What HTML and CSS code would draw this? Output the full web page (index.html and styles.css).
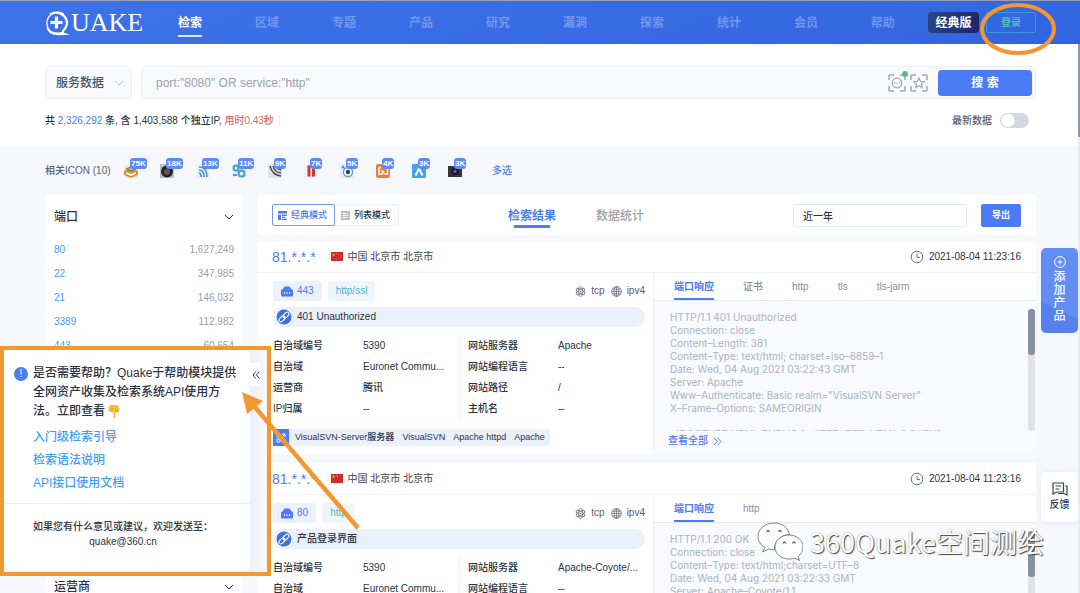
FILE: index.html
```html
<!DOCTYPE html>
<html lang="zh-CN">
<head>
<meta charset="utf-8">
<title>QUAKE</title>
<link rel="stylesheet" href="styles.css">
</head>
<body>
<svg class="sprite" aria-hidden="true">
  <symbol id="chev" viewBox="0 0 10 10"><path d="M1 3l4 4 4-4" fill="none" stroke="currentColor"/></symbol>
  <symbol id="clock" viewBox="0 0 14 14"><circle cx="7" cy="7" r="5.800" fill="none" stroke="currentColor"/><path d="M7 3.500V7.500H10" fill="none" stroke="currentColor"/></symbol>
  <symbol id="flag" viewBox="0 0 12 9"><path fill="#cf2f2c" d="M0 0h12v9H0z"/><path fill="#f5c842" d="M2.600 1l.4 1.200h1.200l-1 .7.4 1.200-1-.7-1 .7.4-1.200-1-.7h1.200zM5 .8h.8v.8H5zM6 2.200h.8V3H6z"/></symbol>
  <symbol id="dock" viewBox="0 0 12 11"><path fill="#4b7bf5" d="M3.500.5h5l2 3H11q1 0 1 1V9.500q0 1-1 1H1q-1 0-1-1V4.500q0-1 1-1h.5z"/><path stroke="#edf1fe" d="M3.500 6v2M6 6v2M8.500 6v2"/></symbol>
  <symbol id="link" viewBox="0 0 16 16"><circle cx="8" cy="8" r="7.500" fill="#3f72d9"/><g fill="none" stroke="#fff" stroke-width="1.100"><rect x="6.500" y="4.200" width="7" height="3.800" rx="1.900" transform="rotate(-42 10 6.100)"/><rect x="2.500" y="8" width="7" height="3.800" rx="1.900" transform="rotate(-42 6 9.900)"/></g></symbol>
  <symbol id="atom" viewBox="0 0 12 12"><g fill="none" stroke="#6e7480" stroke-width=".9"><ellipse cx="6" cy="6" rx="2.300" ry="5.400"/><ellipse cx="6" cy="6" rx="2.300" ry="5.400" transform="rotate(60 6 6)"/><ellipse cx="6" cy="6" rx="2.300" ry="5.400" transform="rotate(120 6 6)"/></g><circle cx="6" cy="6" r="1" fill="#6e7480"/></symbol>
  <symbol id="globe" viewBox="0 0 12 12"><g fill="none" stroke="#6e7480" stroke-width=".9"><circle cx="6" cy="6" r="5.300"/><ellipse cx="6" cy="6" rx="2.500" ry="5.300"/><path d="M6 .7v10.600M.7 6h10.600M1.400 3.500h9.200M1.400 8.500h9.200"/></g></symbol>
  <symbol id="more" viewBox="0 0 10 10"><path d="M1 1l4 4-4 4M5 1l4 4-4 4" fill="none" stroke="currentColor"/></symbol>
</svg>

<header class="topbar">
  <a class="logo" href="#" aria-label="QUAKE">
    <svg class="logo-mark" viewBox="0 0 27 26"><path fill="none" stroke="#fff" stroke-width="1.300" d="M20 4A11 11 0 1 0 12 24"/><path fill="none" stroke="#fff" stroke-width="2.200" d="M6 4.500A11 10.500 0 0 1 23 13Q22.500 18 18.500 21.500"/><path fill="#fff" d="M2 17q5 5.500 12 5.500 3 0 5-1.500l1.500 2 5.500 1.500q-7 1-13 .8Q4 24.500 2 17z"/><path stroke="#fff" stroke-width="3.200" d="M12.500 6.500v12M6.500 12.500h12"/></svg>
    <span class="logo-text">UAKE</span>
  </a>
  <nav class="nav">
    <a class="on" href="#">检索</a><a href="#">区域</a><a href="#">专题</a><a href="#">产品</a><a href="#">研究</a><a href="#">漏洞</a><a href="#">探索</a><a href="#">统计</a><a href="#">会员</a><a href="#">帮助</a>
  </nav>
  <div class="account">
    <button class="classic">经典版</button>
    <button class="login">登录</button>
  </div>
</header>

<section class="search">
  <form class="search-row">
    <div class="kind"><select aria-label="数据类型"><option>服务数据</option></select><svg><use href="#chev"/></svg></div>
    <div class="query">
      <input type="text" aria-label="检索语句" placeholder='port:"8080" OR service:"http"'>
      <button type="button" class="tool" aria-label="图标检索"><svg viewBox="0 0 18 18" fill="none" stroke="#a4a8b1" stroke-width="1.500"><path d="M1 6V1.800Q1 1 1.800 1H6M12 1h4.200q.8 0 .8.8V6M17 12v4.200q0 .8-.8.8H12M6 17H1.800Q1 17 1 16.200V12"/><circle cx="9" cy="9" r="4.800" stroke-width="1.200"/><path d="M6 9h1.400M8.300 9h1.400M10.600 9H12" stroke-width="1.200"/></svg><i class="dot"></i></button>
      <button type="button" class="tool" aria-label="收藏"><svg viewBox="0 0 18 18" fill="none" stroke="#a4a8b1" stroke-width="1.500"><path d="M1 6V1.800Q1 1 1.800 1H6M12 1h4.200q.8 0 .8.8V6M17 12v4.200q0 .8-.8.8H12M6 17H1.800Q1 17 1 16.200V12"/><path stroke-width="1.200" d="M9 4l1.500 3.300 3.600.4-2.700 2.400.8 3.500L9 11.800l-3.200 1.800.8-3.500-2.700-2.400 3.600-.4z"/></svg></button>
      <button type="button" class="go">搜 索</button>
    </div>
  </form>
  <div class="stats">
    <p>共 <b class="blue">2,326,292</b> 条, 含 1,403,588 个独立IP, <span class="red">用时0.43秒</span></p>
    <label class="latest">最新数据 <input type="checkbox"></label>
  </div>
</section>

<div class="icons">
  <span class="icons-label">相关ICON (10)</span>
  <ul class="icon-list">
    <li><svg viewBox="0 0 14 14"><rect width="14" height="14" fill="#f0eeea"/><path fill="#e58c35" d="M0 7l7-3 7 3v4l-7 3-7-3z"/><path fill="#fff" d="M2 8l5 2 5-2v2l-5 2-5-2z"/><path fill="#7c8a4b" d="M1 5l6-3 6 3-6 3z"/><path fill="#f0c56b" d="M4 5l3-1 3 1-3 1z"/></svg><span>75K</span></li>
    <li><svg viewBox="0 0 14 14"><rect width="14" height="14" fill="#bfc0c4"/><circle cx="7" cy="7.500" r="6" fill="#24242a"/><circle cx="7" cy="8" r="3" fill="#555a66"/><circle cx="5.500" cy="8.500" r="1.500" fill="#a04040"/></svg><span>18K</span></li>
    <li><svg viewBox="0 0 14 14"><rect width="14" height="14" fill="#eaf0f6"/><g fill="none" stroke="#4c95c9" stroke-width="1.700"><path d="M3 9q2 0 2 4M3 6q5 0 5 7M3 3q8 0 8 10"/></g></svg><span>13K</span></li>
    <li><svg viewBox="0 0 14 14"><rect width="14" height="14" fill="#e6f2f8"/><g fill="none" stroke="#3aa3cf" stroke-width="2"><circle cx="4" cy="4" r="2.500"/><circle cx="9.500" cy="9.500" r="3"/><path d="M1 11h4"/></g></svg><span>11K</span></li>
    <li><svg viewBox="0 0 14 14"><rect width="14" height="14" fill="#e1e2e5"/><g fill="none" stroke="#4b4d52" stroke-width="1.400"><path d="M2 2q2 9 11 10M5 2q1 6 8 7M8 2q1 3 5 4"/></g></svg><span>9K</span></li>
    <li><svg viewBox="0 0 14 14"><rect width="14" height="14" fill="#f3eff2"/><path fill="#d7352f" d="M3.500 1.500h3v11h-3zM8 1.500h3v11H8z"/></svg><span>7K</span></li>
    <li><svg viewBox="0 0 14 14"><rect width="14" height="14" fill="#e5edf6"/><circle cx="8" cy="8" r="4.500" fill="#fff" stroke="#5298d5" stroke-width="1.300"/><circle cx="8" cy="8" r="2.200" fill="#2b4467"/><circle cx="3" cy="3" r="1.500" fill="#5298d5"/></svg><span>5K</span></li>
    <li><svg viewBox="0 0 14 14"><rect width="14" height="14" rx="2" fill="#ee7f3b"/><path fill="none" stroke="#fff" stroke-width="1.500" d="M5 3.500H3v6.500h3L8 7M9 3.500h2.500V10H9L5.500 6.500"/></svg><span>4K</span></li>
    <li><svg viewBox="0 0 14 14"><rect width="14" height="14" rx="1" fill="#46a2ee"/><path fill="none" stroke="#fff" stroke-width="2" d="M3.500 11.500L7 4.500l3.500 7"/></svg><span>3K</span></li>
    <li><svg viewBox="0 0 14 14"><rect y="2" width="14" height="11" fill="#34343a"/><circle cx="7" cy="7.500" r="3.600" fill="#15151b"/><circle cx="7" cy="7.500" r="1.800" fill="#6854b0"/></svg><span>3K</span></li>
  </ul>
  <a class="multi" href="#">多选</a>
</div>

<main class="content">
  <aside class="facets">
    <section class="facet port">
      <h2>端口 <svg><use href="#chev"/></svg></h2>
      <ul>
        <li><a href="#">80</a><span>1,627,249</span></li>
        <li><a href="#">22</a><span>347,985</span></li>
        <li><a href="#">21</a><span>146,032</span></li>
        <li><a href="#">3389</a><span>112,982</span></li>
        <li><a href="#">443</a><span>60,654</span></li>
      </ul>
    </section>
    <section class="facet isp">
      <h2>运营商 <svg><use href="#chev"/></svg></h2>
    </section>
  </aside>

  <div class="results">
    <div class="toolbar">
      <div class="modes">
        <button class="on"><svg viewBox="0 0 9 9" fill="currentColor"><path d="M0 0h9v2.500H0zM0 3.500h3V9H0zM4 3.500h5V5H4zM4 5.700h3.500V7H4zM4 7.700h5V9H4z"/></svg>经典模式</button>
        <button><svg viewBox="0 0 9 9"><path fill="#bbbdc2" d="M0 0h9v9H0z"/><path stroke="#fff" stroke-width=".7" d="M1.500 2.500h6M1.500 4.500h6M1.500 6.500h6M3 1v7"/></svg>列表模式</button>
      </div>
      <div class="views"><button class="on">检索结果</button><button>数据统计</button></div>
      <input class="range" type="text" aria-label="时间范围" value="近一年">
      <button class="export">导出</button>
    </div>

    <article class="card">
      <header class="card-head">
        <a class="ip" href="#">81.*.*.*</a><svg class="flag"><use href="#flag"/></svg><span class="place">中国 北京市 北京市</span>
        <svg class="clock"><use href="#clock"/></svg><time>2021-08-04 11:23:16</time>
      </header>
      <div class="card-body">
        <div class="info">
          <div class="tags">
            <span class="tag"><svg><use href="#dock"/></svg>443</span><span class="tag teal">http/ssl</span>
            <span class="proto"><svg><use href="#atom"/></svg>tcp</span><span class="proto"><svg><use href="#globe"/></svg>ipv4</span>
          </div>
          <h3><svg><use href="#link"/></svg>401 Unauthorized</h3>
          <div class="facts">
            <dl><dt>自治域编号</dt><dd>5390</dd><dt>自治域</dt><dd>Euronet Commu...</dd><dt>运营商</dt><dd>腾讯</dd><dt>IP归属</dt><dd>--</dd></dl>
            <dl><dt>网站服务器</dt><dd>Apache</dd><dt>网站编程语言</dt><dd>--</dd><dt>网站路径</dt><dd>/</dd><dt>主机名</dt><dd>--</dd></dl>
          </div>
          <ul class="apps">
            <li class="apps-icon"><svg viewBox="0 0 10 10" fill="none" stroke="#fff"><path d="M1 1h3v3H1zM1 6h3v3H1zM6 6h3v3H6zM6 4l3-3M6 1h3v3"/></svg></li>
            <li>VisualSVN-Server服务器</li><li>VisualSVN</li><li>Apache httpd</li><li>Apache</li>
          </ul>
        </div>
        <div class="reply">
          <div class="tabs"><button class="on">端口响应</button><button>证书</button><button>http</button><button>tls</button><button>tls-jarm</button></div>
          <div class="pane"><pre>HTTP/1.1 401 Unauthorized
Connection: close
Content–Length: 381
Content–Type: text/html; charset=iso–8859–1
Date: Wed, 04 Aug 2021 03:22:43 GMT
Server: Apache
Www–Authenticate: Basic realm="VisualSVN Server"
X–Frame–Options: SAMEORIGIN

&lt;!DOCTYPE HTML PUBLIC "–//IETF//DTD HTML 2.0//EN"&gt;</pre><span class="bar"><i></i></span></div>
          <a class="all" href="#">查看全部 <svg><use href="#more"/></svg></a>
        </div>
      </div>
    </article>

    <article class="card">
      <header class="card-head">
        <a class="ip" href="#">81.*.*.*</a><svg class="flag"><use href="#flag"/></svg><span class="place">中国 北京市 北京市</span>
        <svg class="clock"><use href="#clock"/></svg><time>2021-08-04 11:23:16</time>
      </header>
      <div class="card-body">
        <div class="info">
          <div class="tags">
            <span class="tag"><svg><use href="#dock"/></svg>80</span><span class="tag teal">http</span>
            <span class="proto"><svg><use href="#atom"/></svg>tcp</span><span class="proto"><svg><use href="#globe"/></svg>ipv4</span>
          </div>
          <h3><svg><use href="#link"/></svg>产品登录界面</h3>
          <div class="facts">
            <dl><dt>自治域编号</dt><dd>5390</dd><dt>自治域</dt><dd>Euronet Commu...</dd></dl>
            <dl><dt>网站服务器</dt><dd>Apache-Coyote/...</dd><dt>网站编程语言</dt><dd>--</dd></dl>
          </div>
        </div>
        <div class="reply">
          <div class="tabs"><button class="on">端口响应</button><button>http</button></div>
          <div class="pane"><pre>HTTP/1.1 200 OK
Connection: close
Content–Type: text/html;charset=UTF–8
Date: Wed, 04 Aug 2021 03:22:33 GMT
Server: Apache–Coyote/1.1</pre><span class="bar"><i></i></span></div>
        </div>
      </div>
    </article>
  </div>
</main>

<button class="float add"><svg viewBox="0 0 12 12" fill="none" stroke="#fff"><circle cx="6" cy="6" r="5.400"/><path d="M6 3.500v5M3.500 6h5"/></svg><span>添加产品</span></button>
<button class="float feedback"><svg viewBox="0 0 16 14" fill="none" stroke="#3d4350" stroke-width="1.200"><path d="M1 1h10.500v9H4.500L1 12zM3.500 4h5.500M3.500 7h4M13 4h2v9l-3-1.500H6"/></svg><span>反馈</span></button>

<div class="help-zone">
  <section class="help">
    <div class="help-main">
      <span class="mark">!</span>
      <div>
        <p>是否需要帮助？Quake于帮助模块提供全网资产收集及检索系统API使用方法。立即查看<svg class="hand" viewBox="0 0 12 15"><path fill="#f6bd3f" d="M3 1h6q2.500 1 2.500 5 0 2.500-2 2.500L7.500 8v5.500q-1 1.500-2 0V8.500L2 8Q0 7.500.5 4.500 1 1.500 3 1z"/><path fill="none" stroke="#d99423" stroke-width=".6" d="M7.500 8V5M9.500 8V5M2 5h3"/></svg></p>
        <a href="#">入门级检索引导</a><a href="#">检索语法说明</a><a href="#">API接口使用文档</a>
      </div>
    </div>
    <p class="mail">如果您有什么意见或建议，欢迎发送至：<br>quake@360.cn</p>
  </section>
  <button class="fold" aria-label="收起"><svg viewBox="0 0 8 8" fill="none" stroke="#3a3f4b"><path d="M3.800.5L1 4l2.800 3.500M7.300.5L4.500 4l2.800 3.500"/></svg></button>
</div>

<div class="watermark">
  <svg viewBox="0 0 46 40" fill="#fff" stroke="#666" stroke-width=".8"><path d="M17 1C8 1 1 7 1 14.500c0 4.500 2.500 8.500 7 11L5.500 30l6-3c2 .6 4 .8 6 .7C17 20 23 13 32.500 12.500 31 5.500 25 1 17 1z"/><path d="M32 13c-8 0-14 5.500-14 12s6 12 14 12c2 0 4-.3 5.500-1l5 2.500-1.500-4c3-2.200 5-5.500 5-9.500 0-6.500-6-12-14-12z"/><g fill="none" stroke-width="1.300"><path d="M9.500 10q1.500-3 3 0M21.500 10q1.500-3 3 0M26 21.500q1.500-3 3 0M35.500 21.500q1.500-3 3 0"/></g></svg>
  <span>360Quake空间测绘</span>
</div>

<svg class="notes" viewBox="0 0 1080 593" preserveAspectRatio="xMinYMin" aria-hidden="true">
  <g fill="none" stroke="#f29833" stroke-width="4"><ellipse cx="1018" cy="29" rx="36" ry="24"/><path d="M2 348h267v226H2z"/><path d="M254 406l104 122" stroke-width="4.500"/></g>
  <path fill="#f29833" d="M242 392l21 9-16 13z"/>
</svg>
<span class="page-bar"><i></i></span>
</body>
</html>
```

FILE: styles.css
```css
* { box-sizing: border-box; }
body {
  margin: 0;
  height: 100vh;
  overflow: hidden;
  display: flex;
  flex-direction: column;
  position: relative;
  background: #f7f8fd;
  color: #2c3343;
  font: 500 10px/14px "Liberation Sans", "Noto Sans CJK SC", sans-serif;
}
button, input, select { font: inherit; color: inherit; margin: 0; padding: 0; border: 0; background: none; }
a { color: #409eff; text-decoration: none; }
ul, dl, dd, p, h2, h3, pre { margin: 0; padding: 0; list-style: none; }
svg { display: block; flex: none; }
.sprite { position: absolute; width: 0; height: 0; }

/* Header */
.topbar {
  flex: none;
  height: 44px;
  padding: 0 44px;
  display: flex;
  align-items: center;
  border-top: 1px solid #94a0bd;
  background: linear-gradient(160deg, #3d73e9, #3364df);
}
.logo { display: flex; align-items: center; width: 134px; color: #fff; }
.logo-mark { width: 27px; height: 26px; }
.logo-text { font: 26px/26px "Liberation Serif", serif; }
.nav { flex: 1; display: flex; justify-content: space-between; font-size: 12px; font-weight: 700; }
.nav a { line-height: 24px; padding-top: 3px; color: #7397ee; border-bottom: 2px solid transparent; }
.nav .on { color: #fff; border-color: #dfe8ff; }
.account { display: flex; gap: 7px; margin-left: 33px; }
.classic, .login { height: 21px; border-radius: 4px; }
.classic { width: 51px; font-size: 12px; font-weight: 700; color: #fff; background: linear-gradient(110deg, #27478a, #1b2669); }
.login { width: 50px; border: 1px solid #4295d8; border-radius: 2px; color: #50bcc0; font-weight: 700; }

/* Search */
.search { flex: none; background: #fff; padding: 22px 44px 18px 45px; }
.search-row { display: flex; gap: 9px; height: 33px; }
.kind, .query { display: flex; align-items: center; border: 1px solid #eff0f4; border-radius: 5px; background: #f9fafe; font-size: 12px; }
.kind { position: relative; width: 87px; }
.kind select { appearance: none; width: 100%; height: 100%; padding-left: 10px; color: #4d5360; }
.kind svg { position: absolute; right: 7px; width: 10px; height: 10px; color: #bfc2c9; pointer-events: none; }
.query { flex: 1; gap: 4px; padding: 0 3px 0 14px; }
.query input { flex: 1; height: 100%; outline: 0; }
.query input::placeholder { color: #9b9fa9; opacity: 1; }
.tool { position: relative; width: 18px; height: 18px; }
.dot { position: absolute; right: -2px; top: -3px; width: 6px; height: 6px; border-radius: 50%; background: #55bd8d; }
.go { width: 94px; height: 26px; margin-left: 6px; border-radius: 4px; background: #4b7bf5; color: #fff; font-weight: 700; }
.stats { display: flex; justify-content: space-between; align-items: center; padding: 14px 7px 0 0; }
.stats p { padding-right: 5px; border-right: 1px solid #eceef3; }
.blue { color: #4b7bf5; font-weight: 400; }
.red { color: #e06a66; }
.latest { display: flex; align-items: center; gap: 8px; color: #5b606c; }
.latest input { appearance: none; width: 29px; height: 15px; border-radius: 8px; background: radial-gradient(circle at 8px 50%, #fff 6px, #d5d8e1 7px); }

/* Site icons */
.icons { flex: none; height: 49px; padding: 0 45px; display: flex; align-items: center; color: #5b606c; }
.icons-label { width: 79px; }
.icon-list { display: flex; gap: 22px; }
.icon-list li { position: relative; }
.icon-list svg { width: 14px; height: 14px; }
.icon-list span { position: absolute; left: 6px; top: -6px; padding: 0 1px; border-radius: 3px; background: #5f8af7; color: #fff; font-size: 8px; font-weight: 700; line-height: 11px; }
.multi { margin-left: 30px; color: #4b7bf5; }

/* Columns */
.content { flex: 1; min-height: 0; padding: 0 44px 0 45px; display: flex; gap: 14px; align-items: flex-start; }
.facets { width: 198px; flex: none; }
.facet { padding: 0 9px; background: #fff; border-radius: 5px; }
.port { min-height: 376px; }
.facet h2 { display: flex; justify-content: space-between; align-items: center; height: 43px; font-size: 12px; font-weight: 500; }
.facet h2 svg { width: 10px; height: 10px; }
.isp h2 { height: 32px; }
.facet li { display: flex; justify-content: space-between; line-height: 24px; color: #9a9ea8; }
.results { flex: 1; min-width: 0; }

/* Toolbar */
.toolbar { display: flex; align-items: center; height: 40px; padding: 0 15px; background: #fff; border-radius: 4px; }
.modes { display: flex; border: 1px solid #eceef2; border-radius: 3px; }
.modes button { display: flex; align-items: center; gap: 4px; height: 22px; padding: 0 7px 0 5px; margin: -1px 0; border: 1px solid transparent; border-radius: 2px; font-size: 9px; }
.modes .on { margin-left: -1px; border-color: #7699f6; color: #4b7bf5; }
.modes svg { width: 9px; height: 9px; }
.views { display: flex; gap: 40px; margin: 0 auto 0 109px; font-size: 12px; color: #9ea2ab; }
.views button { padding: 7px 0 5px; }
.views .on { color: #4b7bf5; font-weight: 700; background: linear-gradient(#4b7bf5, #4b7bf5) center bottom / 36px 3px no-repeat; }
.range { width: 174px; height: 23px; padding: 0 9px; border: 1px solid #e3e5ea; border-radius: 3px; }
.export { width: 40px; height: 23px; margin-left: 14px; border-radius: 2px; background: #4b7bf5; color: #fff; font-size: 9px; font-weight: 700; }

/* Result cards */
.card { margin-top: 6px; background: #fff; border-radius: 4px; }
.card + .card { margin-top: 9px; }
.card-head { display: flex; align-items: center; height: 32px; padding: 0 15px; border-bottom: 1px solid #eff1f5; }
.ip { font-size: 14px; color: #4b7bf5; }
.flag { width: 12px; height: 9px; margin: 0 5px 0 15px; }
.place { color: #5b606c; }
.clock { width: 14px; height: 14px; margin: 0 5px 0 auto; color: #6e7480; }
.card-body { display: grid; grid-template-columns: 396fr 383fr; }
.info { min-width: 0; padding: 8px 8px 8px 16px; }
.tags { display: flex; align-items: center; gap: 6px; height: 20px; margin-bottom: 6px; }
.tag { display: flex; align-items: center; gap: 4px; height: 20px; padding: 0 8px; border-radius: 3px; background: #edf1fe; color: #4b7bf5; }
.tag svg { width: 12px; height: 11px; }
.teal { background: #eef6fa; color: #4fb3cc; }
.proto { display: flex; align-items: center; gap: 5px; color: #5b606c; }
.proto svg { width: 11px; height: 11px; }
.teal + .proto { margin-left: auto; }
.info h3 { display: flex; align-items: center; gap: 5px; height: 20px; padding-left: 3px; border-radius: 10px; background: #eaf1fc; font-size: 10px; font-weight: 500; }
.info h3 svg { width: 16px; height: 16px; }
.facts { display: grid; grid-template-columns: 1fr 1fr; margin-top: 8px; line-height: 21px; }
.facts dl { display: grid; grid-template-columns: 90px 1fr; white-space: nowrap; }
.facts dl + dl { padding-left: 8px; border-left: 1px solid #eff1f5; }
.apps { display: flex; width: max-content; margin-top: 10px; padding-right: 1px; background: #edf1fe; border-radius: 2px; font-size: 9px; line-height: 17px; }
.apps li { padding: 0 4px; }
.apps .apps-icon { display: grid; place-items: center; width: 16px; margin-right: 2px; padding: 0; background: #4b7bf5; }
.apps svg { width: 10px; height: 10px; }
.reply { display: flex; flex-direction: column; min-width: 0; border-left: 1px solid #eff1f5; background: #f9fafd; }
.tabs { display: flex; gap: 29px; height: 28px; padding-left: 20px; background: #fff; border-bottom: 1px solid #e6e9ef; color: #8b909b; }
.tabs .on { color: #4b7bf5; font-weight: 700; box-shadow: inset 0 -2px #4b7bf5; }
.pane { position: relative; height: 130px; overflow: hidden; padding: 10px 16px; }
.pane pre { font: 10px/13px Inter, sans-serif; color: #a9b4c2; }
.bar { position: absolute; right: 1px; top: 8px; bottom: 0; width: 7px; border-radius: 3px; background: #e0e2e8; }
.bar i { display: block; height: 46px; border-radius: 3px; background: #8791a5; }
.all { display: flex; align-items: center; gap: 5px; padding: 2px 14px; line-height: 16px; color: #4b7bf5; }
.all svg { width: 9px; height: 9px; }

/* Side buttons */
.float { position: absolute; right: 2px; width: 37px; display: flex; flex-direction: column; align-items: center; border-radius: 5px; }
.add { top: 248px; height: 85px; padding-top: 8px; gap: 3px; color: #fff; font-size: 12px; line-height: 13px; background: linear-gradient(25deg, #5680eb 30%, #628df3 31%); }
.add svg { width: 12px; height: 12px; }
.add span { width: 12px; }
.feedback { top: 472px; height: 50px; padding-top: 10px; gap: 2px; background: #fff; box-shadow: 0 1px 6px #e3e6ef; }
.feedback svg { width: 16px; height: 14px; }

/* Help panel */
.help-zone { position: absolute; left: 0; top: 350px; width: 268px; height: 224px; display: flex; align-items: flex-start; background: linear-gradient(90deg, #eff1f7 94%, #f8f9fc); }
.help { width: 250px; height: 221px; background: #fff; border-radius: 0 5px 5px 0; }
.help-main { display: flex; gap: 5px; height: 154px; padding: 14px 10px 0 14px; border-bottom: 1px solid #eceef2; font-size: 12px; line-height: 19px; }
.mark { flex: none; width: 14px; height: 14px; margin-top: 3px; border-radius: 50%; background: #4b7bf5; color: #fff; font-size: 10px; line-height: 14px; text-align: center; }
.hand { display: inline-block; width: 12px; height: 15px; margin-left: 3px; vertical-align: middle; }
.help-main a { display: block; line-height: 23px; }
.help-main p { margin-bottom: 5px; }
.mail { padding-top: 15px; padding-right: 4px; text-align: center; line-height: 15px; }
.fold { display: grid; place-items: center; width: 11px; height: 23px; margin-top: 13px; background: #fff; border-radius: 0 3px 3px 0; }
.fold svg { width: 8px; height: 8px; }

/* Watermark and hand-drawn notes */
.watermark { position: absolute; left: 757px; top: 522px; display: flex; gap: 7px; color: #fff; font: 27px/40px "Noto Sans CJK SC", sans-serif; text-shadow: 1px 1px 1px #444, 0 0 1px #888; white-space: nowrap; }
.watermark svg { width: 46px; height: 40px; }
.notes { position: absolute; left: 0; top: 0; width: 1080px; height: 593px; pointer-events: none; }
.page-bar { position: absolute; right: 0; top: 44px; bottom: 0; width: 2px; background: #e9ebf1; }
.page-bar i { display: block; height: 93px; background: #8f97a8; }
```
